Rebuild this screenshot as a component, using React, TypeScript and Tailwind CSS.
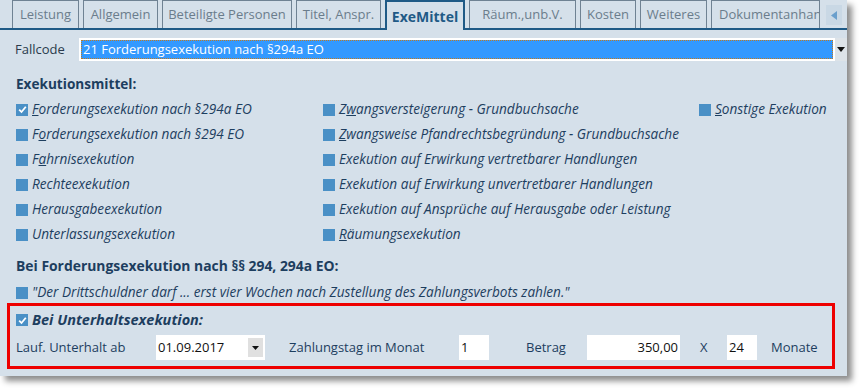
import React from 'react';

const tabs = [
  { label: 'Leistung', w: 'w-[67px]' },
  { label: 'Allgemein', w: 'w-[75px]' },
  { label: 'Beteiligte Personen', w: 'w-[130px]' },
  { label: 'Titel, Anspr.', w: 'w-[85px]' },
  { label: 'ExeMittel', w: 'w-[80px]', active: true },
  { label: 'Räum.,unb.V.', w: 'w-[107px]' },
  { label: 'Kosten', w: 'w-[56px]' },
  { label: 'Weiteres', w: 'w-[67px]' },
  { label: 'Dokumentanhang', w: 'w-[109px]', clip: true },
];

function Box({ checked }: { checked?: boolean }) {
  return (
    <span className="inline-flex h-[12px] w-[12px] shrink-0 items-center justify-center bg-[#4a90c6]">
      {checked && (
        <svg width="9" height="9" viewBox="0 0 9 9">
          <path d="M1.2 4.6 L3.5 7 L7.8 1.8" stroke="white" strokeWidth="1.8" fill="none" />
        </svg>
      )}
    </span>
  );
}

// label with accelerator letter underlined
function Opt({ pre = '', u = '', post, checked }: { pre?: string; u?: string; post: string; checked?: boolean }) {
  return (
    <div className="flex h-[25px] items-center gap-[4px]">
      <Box checked={checked} />
      <span className="whitespace-nowrap text-[13.6px] italic">
        {pre}
        {u && <span className="underline">{u}</span>}
        {post}
      </span>
    </div>
  );
}

function Field({ w, children, right }: { w: string; children: React.ReactNode; right?: boolean }) {
  return (
    <div className={`${w} flex h-[25px] shrink-0 items-center bg-white px-[2px] text-[#111] ${right ? 'justify-end' : ''}`}>
      {children}
    </div>
  );
}

export default function App() {
  return (
    <div className="relative h-[392px] w-[863px] overflow-hidden bg-white text-[13px] text-[#1d3e5f]" style={{ fontFamily: '"Open Sans", sans-serif' }}>
      <div className="h-[376px] w-[847px] bg-[#d5e0ea] shadow-[5px_5px_6px_rgba(0,0,0,0.45)]">
        {/* Tabs */}
        <div className="flex h-[30px] items-end gap-[4px] border-b-2 border-[#1f5a86] pl-[12px]">
          {tabs.map(t =>
            t.active ? (
              <div
                key={t.label}
                className={`${t.w} -mb-[2px] flex h-[30px] shrink-0 items-center justify-center border-2 border-b-0 border-[#1f5a86] bg-[#d5e0ea] text-[14px] font-bold text-[#1f5a86]`}
              >
                {t.label}
              </div>
            ) : (
              <div
                key={t.label}
                className={`${t.w} flex h-[28px] shrink-0 items-center overflow-hidden whitespace-nowrap border border-b-0 border-[#6f8293] text-[13px] text-[#6b7d8c] ${t.clip ? 'justify-start pl-[7px]' : 'justify-center'}`}
              >
                {t.label}
              </div>
            )
          )}
          <div className="ml-[2px] mb-[3px] flex h-[20px] w-[16px] items-center justify-center bg-[#c9d8e5]">
            <svg width="6" height="9" viewBox="0 0 6 9">
              <path d="M6 0 L0 4.5 L6 9 Z" fill="#6a9fcc" />
            </svg>
          </div>
        </div>

        {/* Fallcode */}
        <div className="mt-[8px] flex h-[23px] items-center pl-[15px]">
          <span className="w-[64px] text-[#2a3b4c]">Fallcode</span>
          <div className="flex h-[23px] w-[756px] items-center bg-white p-[2px]">
            <div className="flex h-full w-full items-center border border-dotted border-[#c07a20] bg-[#3399ff] pl-[1px] text-white">
              21 Forderungsexekution nach §294a EO
            </div>
          </div>
          <div className="flex h-[23px] w-[12px] items-center justify-center bg-[#dde3e8]">
            <svg width="8" height="5" viewBox="0 0 8 5">
              <path d="M0 0 L8 0 L4 5 Z" fill="#111" />
            </svg>
          </div>
        </div>

        {/* Exekutionsmittel */}
        <div className="mt-[13px] pl-[16px] text-[13.6px] font-bold leading-[20px]">Exekutionsmittel:</div>
        <div className="mt-[3px] grid grid-cols-[307px_376px_1fr] pl-[16px]">
          <div>
            <Opt u="F" post="orderungsexekution nach §294a EO" checked />
            <Opt pre="F" u="o" post="rderungsexekution nach §294 EO" />
            <Opt pre="F" u="a" post="hrnisexekution" />
            <Opt post="Rechteexekution" />
            <Opt post="Herausgabeexekution" />
            <Opt post="Unterlassungsexekution" />
          </div>
          <div>
            <Opt pre="Z" u="w" post="angsversteigerung - Grundbuchsache" />
            <Opt u="Z" post="wangsweise Pfandrechtsbegründung - Grundbuchsache" />
            <Opt post="Exekution auf Erwirkung vertretbarer Handlungen" />
            <Opt post="Exekution auf Erwirkung unvertretbarer Handlungen" />
            <Opt post="Exekution auf Ansprüche auf Herausgabe oder Leistung" />
            <Opt u="R" post="äumungsexekution" />
          </div>
          <div>
            <Opt u="S" post="onstige Exekution" />
          </div>
        </div>

        {/* Bei Forderungsexekution */}
        <div className="mt-[9px] pl-[16px] text-[13.9px] font-bold leading-[20px]">Bei Forderungsexekution nach §§ 294, 294a EO:</div>
        <div className="mt-[4px] pl-[16px]">
          <Opt post={'"Der Drittschuldner darf ... erst vier Wochen nach Zustellung des Zahlungsverbots zahlen."'} />
        </div>

        {/* Unterhalt */}
        <div className="ml-[7px] mt-[-2px] h-[66px] w-[828px] border-[3px] border-[#ee0000] pl-[6px]">
          <div className="mt-[4px] flex h-[20px] items-center gap-[4px]">
            <Box checked />
            <span className="text-[14.5px] font-bold italic">Bei Unterhaltsexekution:</span>
          </div>
          <div className="mt-[5px] flex h-[25px] items-center">
            <span className="w-[140px] shrink-0">Lauf. Unterhalt ab</span>
            <Field w="w-[109px]">
              <span className="flex-1">01.09.2017</span>
              <span className="flex h-[19px] w-[15px] items-center justify-center bg-[#e0e0e0]">
                <svg width="7" height="4" viewBox="0 0 7 4">
                  <path d="M0 0 L7 0 L3.5 4 Z" fill="#111" />
                </svg>
              </span>
            </Field>
            <span className="ml-[24px] w-[170px] shrink-0">Zahlungstag im Monat</span>
            <Field w="w-[30px]">1</Field>
            <span className="ml-[37px] w-[61px] shrink-0">Betrag</span>
            <Field w="w-[93px]" right>
              350,00
            </Field>
            <span className="ml-[20px] w-[27px] shrink-0">X</span>
            <Field w="w-[30px]">24</Field>
            <span className="ml-[14px]">Monate</span>
          </div>
        </div>
      </div>
    </div>
  );
}
